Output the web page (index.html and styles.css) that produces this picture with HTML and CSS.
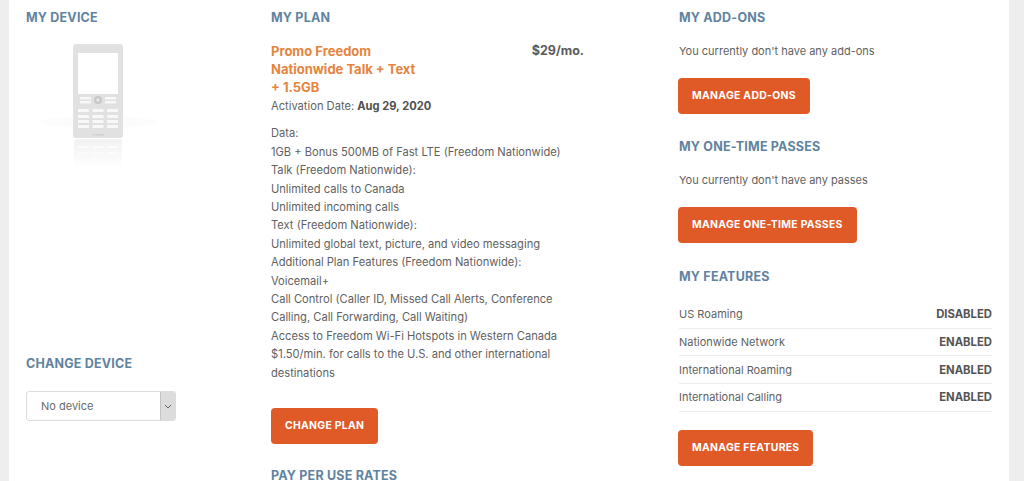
FILE: index.html
```html
<!DOCTYPE html>
<html lang="en">
<head>
<meta charset="utf-8">
<title>My Account</title>
<link rel="stylesheet" href="styles.css">
</head>
<body>
<main class="panel">
  <section class="col col-device">
    <h2 class="heading">MY DEVICE</h2>
    <svg class="phone" width="130" height="135" viewBox="0 0 130 135" aria-hidden="true">
      <defs>
        <linearGradient id="fade" x1="0" y1="0" x2="0" y2="1">
          <stop offset="0" stop-color="#e4e4e4" stop-opacity=".5"/>
          <stop offset="1" stop-color="#e4e4e4" stop-opacity="0"/>
        </linearGradient>
      </defs>
      <ellipse cx="65" cy="78" rx="58" ry="6" fill="#fcfcfc"/>
      <rect x="40" y="0" width="50" height="94" rx="3" fill="#e1e1e1"/>
      <rect x="45" y="9" width="40" height="41" fill="#fff"/>
      <g fill="#f8f8f8">
        <rect x="47" y="53" width="11" height="2.500"/><rect x="47" y="57" width="11" height="2.500"/>
        <rect x="72" y="53" width="11" height="2.500"/><rect x="72" y="57" width="11" height="2.500"/>
        <rect x="45" y="65" width="11" height="3"/><rect x="59.500" y="65" width="11" height="3"/><rect x="74" y="65" width="11" height="3"/>
        <rect x="45" y="71" width="11" height="3"/><rect x="59.500" y="71" width="11" height="3"/><rect x="74" y="71" width="11" height="3"/>
        <rect x="45" y="76" width="11" height="3"/><rect x="59.500" y="76" width="11" height="3"/><rect x="74" y="76" width="11" height="3"/>
        <rect x="45" y="81" width="11" height="3"/><rect x="59.500" y="81" width="11" height="3"/><rect x="74" y="81" width="11" height="3"/>
      </g>
      <circle cx="65" cy="56" r="4" fill="#c8c8c8"/>
      <circle cx="65" cy="56" r="1.800" fill="#e8e8e8"/>
      <rect x="59" y="90" width="12" height="1.500" fill="#d2d2d2"/>
      <rect x="41" y="95" width="48" height="29" rx="2" fill="url(#fade)"/>
      <g fill="#fff" opacity=".7">
        <rect x="45" y="102" width="11" height="2"/><rect x="59.500" y="102" width="11" height="2"/><rect x="74" y="102" width="11" height="2"/>
        <rect x="45" y="108" width="11" height="2"/><rect x="59.500" y="108" width="11" height="2"/><rect x="74" y="108" width="11" height="2"/>
      </g>
    </svg>
    <h2 class="heading heading-change">CHANGE DEVICE</h2>
    <div class="select">
      <span class="select-value">No device</span>
      <span class="select-arrow">
        <svg width="8" height="5" viewBox="0 0 8 5" aria-hidden="true"><path d="M1 1l3 3 3-3" fill="none" stroke="#666" stroke-width="1"/></svg>
      </span>
    </div>
  </section>

  <section class="col col-plan">
    <h2 class="heading">MY PLAN</h2>
    <div class="plan-head">
      <h3 class="plan-name">Promo Freedom Nationwide Talk + Text + 1.5GB</h3>
      <span class="plan-price">$29/mo.</span>
    </div>
    <p class="line line-date">Activation Date: <b>Aug 29, 2020</b></p>
    <div class="details">
      <p class="line">Data:</p>
      <p class="line">1GB + Bonus 500MB of Fast LTE (Freedom Nationwide)</p>
      <p class="line">Talk (Freedom Nationwide):</p>
      <p class="line">Unlimited calls to Canada</p>
      <p class="line">Unlimited incoming calls</p>
      <p class="line">Text (Freedom Nationwide):</p>
      <p class="line">Unlimited global text, picture, and video messaging</p>
      <p class="line">Additional Plan Features (Freedom Nationwide):</p>
      <p class="line">Voicemail+</p>
      <p class="line">Call Control (Caller ID, Missed Call Alerts, Conference<br>Calling, Call Forwarding, Call Waiting)</p>
      <p class="line">Access to Freedom Wi-Fi Hotspots in Western Canada</p>
      <p class="line">$1.50/min. for calls to the U.S. and other international<br>destinations</p>
    </div>
    <a class="btn btn-plan" href="#">CHANGE PLAN</a>
    <h2 class="heading heading-rates">PAY PER USE RATES</h2>
  </section>

  <section class="col col-extras">
    <h2 class="heading">MY ADD-ONS</h2>
    <p class="note">You currently don't have any add-ons</p>
    <a class="btn" href="#">MANAGE ADD-ONS</a>
    <h2 class="heading heading-sub">MY ONE-TIME PASSES</h2>
    <p class="note">You currently don't have any passes</p>
    <a class="btn" href="#">MANAGE ONE-TIME PASSES</a>
    <h2 class="heading heading-features">MY FEATURES</h2>
    <ul class="features">
      <li class="feature"><span>US Roaming</span><b>DISABLED</b></li>
      <li class="feature"><span>Nationwide Network</span><b>ENABLED</b></li>
      <li class="feature"><span>International Roaming</span><b>ENABLED</b></li>
      <li class="feature"><span>International Calling</span><b>ENABLED</b></li>
    </ul>
    <a class="btn btn-features" href="#">MANAGE FEATURES</a>
  </section>
</main>
</body>
</html>
```
FILE: styles.css
```css
* { box-sizing: border-box; }
html, body { margin: 0; height: 481px; overflow: hidden; }
body { background: #eeeeee; font-family: Inter, "Liberation Sans", sans-serif; color: #5f5f5f; }
.panel {
  margin: 0 15px 0 9px;
  width: 1000px;
  height: 481px;
  background: #fff;
  padding: 11px 17px 0;
  display: grid;
  grid-template-columns: 245px 408px 313px;
  overflow: hidden;
}
.col { min-width: 0; }
.heading {
  margin: 0;
  font-size: 12.500px;
  line-height: 14px;
  font-weight: 700;
  color: #5f83a0;
  letter-spacing: .2px;
}
.phone { display: block; margin: 19px 0 0 7px; }
.heading-change { margin-top: 178px; }
.select {
  margin-top: 20px;
  width: 150px;
  height: 30px;
  border: 1px solid #dcdcdc;
  border-radius: 3px;
  display: flex;
  background: #fff;
}
.select-value { flex: 1; padding-left: 14px; font-size: 11px; line-height: 28px; color: #6a6a6a; }
.select-arrow {
  width: 15px;
  background: #dcdcdc;
  border-left: 1px solid #c4c4c4;
  border-radius: 0 2px 2px 0;
  display: flex;
  align-items: center;
  justify-content: center;
}
.plan-head { width: 313px; margin-top: 17px; display: flex; justify-content: space-between; align-items: flex-start; }
.plan-name { margin: 0; width: 152px; font-size: 13px; line-height: 18px; font-weight: 700; color: #e6843e; }
.plan-price { font-size: 12.500px; line-height: 18px; font-weight: 700; color: #5a5a5a; }
.line { margin: 0; font-size: 11.150px; line-height: 18.400px; color: #5f5f5f; }
.line b { font-weight: 700; color: #4f4f4f; }
.line-date { margin-top: 1px; }
.details { margin-top: 9px; }
.btn {
  display: inline-block;
  height: 36px;
  padding: 0 14px;
  border-radius: 4px;
  background: #e05a27;
  color: #fff;
  font-size: 10.400px;
  font-weight: 700;
  line-height: 36px;
  letter-spacing: .3px;
  text-decoration: none;
}
.btn-plan { margin-top: 26px; }
.col-extras .btn { margin-left: -1px; }
.heading-rates { margin-top: 25px; }
.note { margin: 20px 0 0; font-size: 11px; line-height: 13px; color: #5f5f5f; }
.note + .btn { margin-top: 20px; }
.heading-sub { margin-top: 26px; }
.heading-features { margin-top: 27px; }
.features { list-style: none; margin: 17px 0 0; padding: 0; }
.feature {
  height: 27.700px;
  display: flex;
  justify-content: space-between;
  align-items: center;
  border-bottom: 1px solid #ececec;
  font-size: 11px;
}
.feature b { font-size: 11.300px; font-weight: 700; color: #555; }
.btn-features { margin-top: 18px; }
```
